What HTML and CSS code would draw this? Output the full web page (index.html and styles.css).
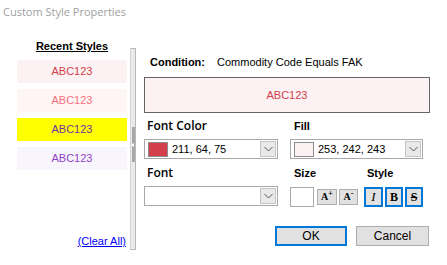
FILE: index.html
```html
<!DOCTYPE html>
<html>
<head>
    <title>Custom Style Properties</title>
    <link rel="stylesheet" href="styles.css">
</head>
<body>
    <div class="titlebar">Custom Style Properties</div>

    <div class="main">
        <div class="recent">
            <div class="recent-title">Recent Styles</div>
            <div class="recent-list">
                <div class="recent-item style-1">ABC123</div>
                <div class="recent-item style-2">ABC123</div>
                <div class="recent-item style-3">ABC123</div>
                <div class="recent-item style-4">ABC123</div>
            </div>
            <a class="clear-all" href="#">(Clear All)</a>
        </div>

        <div class="splitter">
            <div class="splitter-grip"><span class="grip-arrow"></span></div>
        </div>

        <div class="editor">
            <div class="condition">
                <span class="condition-label">Condition:</span>
                <span class="condition-text">Commodity Code Equals FAK</span>
            </div>

            <div class="preview">ABC123</div>

            <div class="field-row">
                <div class="field">
                    <div class="field-label">Font Color</div>
                    <div class="combo">
                        <span class="chip chip-red"></span>
                        <span class="combo-value">211, 64, 75</span>
                        <span class="combo-button">
                            <svg width="9" height="6" viewBox="0 0 9 6"><polyline points="0.5,1 4.5,5 8.5,1" fill="none" stroke="#555" stroke-width="1"/></svg>
                        </span>
                    </div>
                </div>
                <div class="field">
                    <div class="field-label alt">Fill</div>
                    <div class="combo">
                        <span class="chip chip-pink"></span>
                        <span class="combo-value">253, 242, 243</span>
                        <span class="combo-button">
                            <svg width="9" height="6" viewBox="0 0 9 6"><polyline points="0.5,1 4.5,5 8.5,1" fill="none" stroke="#555" stroke-width="1"/></svg>
                        </span>
                    </div>
                </div>
            </div>

            <div class="field-row">
                <div class="field">
                    <div class="field-label">Font</div>
                    <div class="combo">
                        <span class="combo-value"></span>
                        <span class="combo-button">
                            <svg width="9" height="6" viewBox="0 0 9 6"><polyline points="0.5,1 4.5,5 8.5,1" fill="none" stroke="#555" stroke-width="1"/></svg>
                        </span>
                    </div>
                </div>
                <div class="field">
                    <div class="label-row">
                        <span class="field-label alt size-label">Size</span>
                        <span class="field-label alt style-label">Style</span>
                    </div>
                    <div class="tool-row">
                        <div class="size-box"></div>
                        <div class="tool tool-grow">A<sup>+</sup></div>
                        <div class="tool">A<sup>-</sup></div>
                        <div class="toggle first italic">I</div>
                        <div class="toggle bold">B</div>
                        <div class="toggle strike">S</div>
                    </div>
                </div>
            </div>

            <div class="dialog-buttons">
                <button class="btn btn-default">OK</button>
                <button class="btn">Cancel</button>
            </div>
        </div>
    </div>
</body>
</html>
```

FILE: styles.css
```css
body { margin: 0; width: 447px; height: 265px; background: #fff; font-family: "Liberation Sans", Arial, sans-serif; font-size: 11px; color: #000; overflow: hidden; }

.titlebar { height: 36px; padding: 4px 0 0 3px; font-family: "Open Sans", sans-serif; font-size: 11px; line-height: 15px; color: #a0a0a0; }

.main { display: flex; height: 225px; }

.recent { width: 130px; display: flex; flex-direction: column; padding-bottom: 17px; box-sizing: border-box; }
.recent-title { padding: 0 3px 0 17px; text-align: center; font-weight: bold; line-height: 13px; text-decoration: underline; }
.recent-list { display: flex; flex-direction: column; gap: 6px; margin: 7px 3px 0 17px; }
.recent-item { height: 23px; line-height: 23px; text-align: center; }
.style-1 { background: #fdf2f3; color: #d3404b; }
.style-2 { background: #fff5f5; color: #f7707e; }
.style-3 { background: #ffff00; color: #7232a2; }
.style-4 { background: #f8f5fc; color: #8c42c6; }
.clear-all { margin-top: auto; align-self: flex-end; margin-right: 4px; line-height: 13px; color: #0000ff; text-decoration: underline; }

.splitter { width: 6px; height: 202px; margin-top: 8px; box-sizing: border-box; background: #ebebeb; border: 1px solid #b8b8b8; border-left-color: #d4d4d4; }
.splitter-grip { width: 3px; height: 35px; margin: 78px 0 0 1px; background: #a8a8a8; display: flex; align-items: center; }
.grip-arrow { width: 0; height: 0; margin-left: -1px; border-top: 2.5px solid transparent; border-bottom: 2.5px solid transparent; border-right: 3px solid #fff; }

.editor { flex: 1; padding: 0 17px 0 8px; }

.condition { margin-top: 16px; padding-left: 6px; line-height: 13px; }
.condition-label { font-weight: bold; }
.condition-text { margin-left: 9px; }

.preview { height: 36px; margin-top: 8px; box-sizing: border-box; border: 1px solid #646464; background: #fdf2f3; color: #d3404b; display: flex; align-items: center; justify-content: center; }

.field-row { display: grid; grid-template-columns: 134px 133px; column-gap: 12px; margin-top: 5px; }
.field-row + .field-row { margin-top: 6px; }
.field-label { font-family: "Open Sans", sans-serif; font-weight: 600; font-size: 12px; line-height: 16px; height: 16px; padding-left: 3px; }
.field-label.alt { font-family: "Liberation Sans", Arial, sans-serif; font-weight: bold; font-size: 11px; padding-left: 4px; }

.combo { height: 20px; margin-top: 5px; box-sizing: border-box; border: 1px solid #a8a8a8; display: flex; align-items: center; padding-left: 3px; }
.chip { width: 20px; height: 15px; box-sizing: border-box; border: 1px solid #8c8c8c; }
.chip-red { background: #d3404b; }
.chip-pink { background: #fdf2f3; }
.combo-value { flex: 1; padding-left: 4px; }
.combo-button { width: 16px; height: 16px; margin-right: 1px; box-sizing: border-box; border: 1px solid #c4c4c4; background: #e9e9e9; display: flex; align-items: center; justify-content: center; }

.label-row { display: flex; }
.size-label { width: 69px; }
.style-label { padding-left: 0; }

.tool-row { display: flex; align-items: center; height: 20px; margin-top: 6px; }
.size-box { width: 24px; height: 20px; box-sizing: border-box; border: 1px solid #a8a8a8; background: #fff; margin-right: 3px; }
.tool { width: 19px; height: 16px; box-sizing: border-box; border: 1px solid #adadad; background: #e1e1e1; margin-right: 2px; display: flex; align-items: center; justify-content: center; font-family: "Liberation Serif", serif; font-weight: bold; font-size: 10px; line-height: 10px; }
.tool sup { font-size: 8px; line-height: 6px; align-self: flex-start; margin-top: 1px; }
.tool-grow { width: 20px; }
.toggle { width: 18px; height: 20px; box-sizing: border-box; border: 2px solid #0078d7; background: #e1e1e1; margin-left: 2px; display: flex; align-items: center; justify-content: center; font-family: "Liberation Serif", serif; font-size: 12px; font-weight: bold; }
.toggle.first { margin-left: 4px; width: 19px; }
.italic { font-style: italic; font-weight: normal; font-size: 13px; }
.strike { text-decoration: line-through; }

.dialog-buttons { display: flex; justify-content: flex-end; gap: 9px; margin: 19px 1px 0 0; }
.btn { height: 20px; width: 73px; box-sizing: border-box; border: 1px solid #adadad; background: #e1e1e1; font-family: "Liberation Sans", Arial, sans-serif; font-size: 12px; padding: 0; color: #000; }
.btn-default { width: 72px; border: 2px solid #0078d7; }
```
